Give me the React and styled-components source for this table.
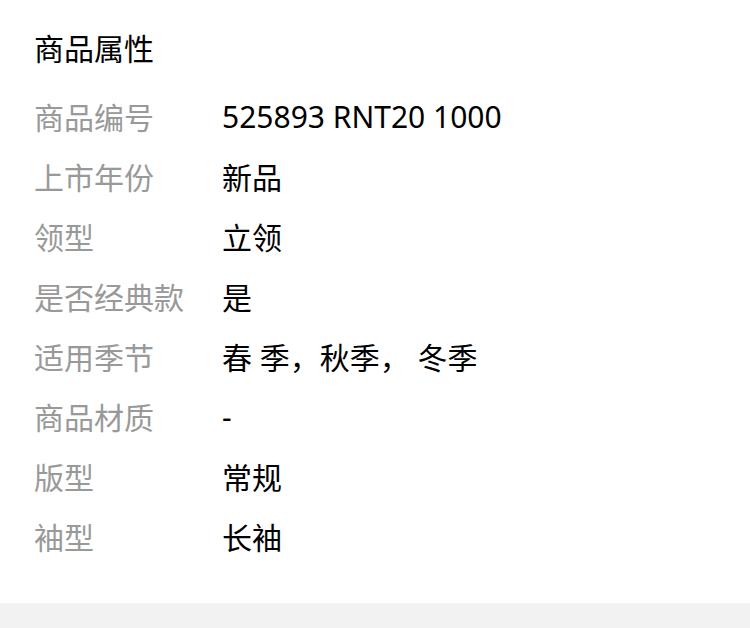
import React from "react"
import styled, { createGlobalStyle } from "styled-components"

const GlobalStyle = createGlobalStyle`
  html, body {
    margin: 0;
    padding: 0;
    background: #fff;
  }
  body {
    font-family: "Noto Sans", "Noto Sans CJK SC", sans-serif;
  }
`

const Page = styled.div`
  width: 750px;
  height: 628px;
  display: flex;
  flex-direction: column;
  background: #fff;
`

const Section = styled.section`
  padding: 29px 34px 0;
  flex: 1;
`

const Title = styled.h2`
  margin: 0 0 17px;
  font-size: 30px;
  line-height: 40px;
  font-weight: 400;
  color: #000;
`

const Row = styled.div`
  display: flex;
  align-items: center;
  height: 60px;
  font-size: 30px;
`

const Label = styled.span`
  width: 188px;
  flex: none;
  color: #999;
`

const Value = styled.span`
  color: #000;
  white-space: pre;
`

const Footer = styled.div`
  height: 25px;
  background: #f2f2f2;
`

const attrs = [
  ["商品编号", "525893 RNT20 1000"],
  ["上市年份", "新品"],
  ["领型", "立领"],
  ["是否经典款", "是"],
  ["适用季节", "春 季，秋季， 冬季"],
  ["商品材质", "-"],
  ["版型", "常规"],
  ["袖型", "长袖"],
]

export default function App() {
  return (
    <>
      <GlobalStyle />
      <Page>
        <Section>
          <Title>商品属性</Title>
          {attrs.map(([k, v]) => (
            <Row key={k}>
              <Label>{k}</Label>
              <Value>{v}</Value>
            </Row>
          ))}
        </Section>
        <Footer />
      </Page>
    </>
  )
}
